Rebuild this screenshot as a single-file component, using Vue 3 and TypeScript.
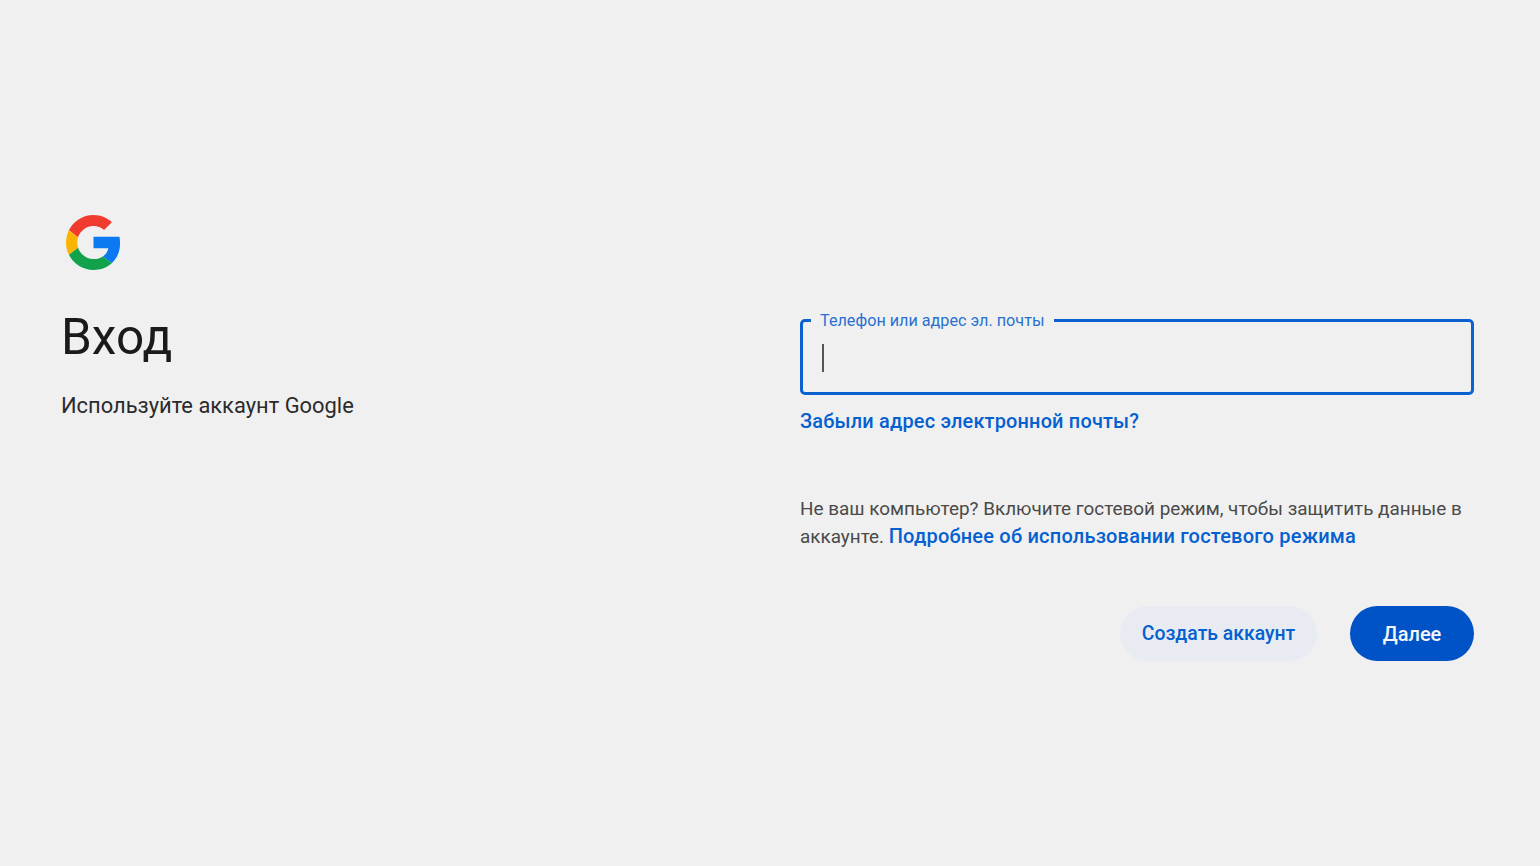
<script setup lang="ts">
const label: string = 'Телефон или адрес эл. почты'
</script>

<template>
  <main class="page">
    <section class="intro">
      <svg class="logo" viewBox="0 0 48 48" aria-label="Google">
        <path fill="#F23B2F" d="M24 9.5c3.54 0 6.71 1.22 9.21 3.6l6.85-6.85C35.9 2.38 30.47 0 24 0 14.62 0 6.51 5.38 2.56 13.22l7.98 6.19C12.43 13.72 17.74 9.5 24 9.5z"/>
        <path fill="#0C78F2" d="M47.2 24.55c0-1.9-.2-3.8-.6-5.55H24v10.02h12.94c-.58 2.96-2.26 5.48-4.78 7.18l7.73 6c4.51-4.18 7.31-10.36 7.31-17.65z"/>
        <path fill="#FBB400" d="M10.53 28.59c-.48-1.45-.76-2.99-.76-4.59s.27-3.14.76-4.59l-7.98-6.19C.92 16.46 0 20.12 0 24c0 3.88.92 7.54 2.56 10.78l7.97-6.19z"/>
        <path fill="#12A24B" d="M24 48c6.48 0 11.93-2.13 15.89-5.81l-7.73-6c-2.15 1.45-4.92 2.3-8.16 2.3-6.26 0-11.57-4.22-13.47-9.91l-7.98 6.19C6.51 42.62 14.62 48 24 48z"/>
      </svg>
      <h1>Вход</h1>
      <p class="sub">Используйте аккаунт Google</p>
    </section>

    <section class="form">
      <div class="field">
        <span class="label">{{ label }}</span>
        <span class="caret"></span>
      </div>
      <a class="link forgot">Забыли адрес электронной почты?</a>
      <p class="guest">Не ваш компьютер? Включите гостевой режим, чтобы защитить данные в аккаунте. <a class="link">Подробнее об использовании гостевого режима</a></p>
      <div class="actions">
        <button class="btn ghost">Создать аккаунт</button>
        <button class="btn primary">Далее</button>
      </div>
    </section>
  </main>
</template>

<style>
html, body { margin: 0; background: #f0f0f0; }
</style>

<style scoped>
.page {
  box-sizing: border-box;
  height: 866px;
  display: flex;
  justify-content: space-between;
  padding: 215px 66px 0 61px;
  background: #f0f0f0;
  font-family: Roboto, "Liberation Sans", sans-serif;
  color: #1f1f1f;
}
.intro { width: 600px; }
.logo { display: block; width: 55px; height: 55px; margin-left: 5px; }
h1 {
  margin: 37px 0 0;
  font-size: 49.5px;
  line-height: 60px;
  font-weight: 400;
  color: #1a1a1a;
}
.sub {
  margin: 24px 0 0;
  font-size: 21.9px;
  line-height: 30px;
  color: #2b2b2b;
}
.form {
  width: 674px;
  padding-top: 104px;
}
.field {
  position: relative;
  box-sizing: border-box;
  height: 76px;
  border: 3px solid #0b62cf;
  border-radius: 5px;
}
.label {
  position: absolute;
  left: 8px;
  top: -11px;
  padding: 0 9px 0 9px;
  background: #f0f0f0;
  font-size: 16.2px;
  line-height: 20px;
  color: #2a70d0;
}
.caret {
  position: absolute;
  left: 19px;
  top: 22px;
  width: 2px;
  height: 28px;
  background: #555;
}
.link {
  color: #0560d0;
  font-weight: 500;
  letter-spacing: 0.2px;
}
.forgot {
  display: block;
  margin-top: 12px;
  font-size: 19.9px;
  line-height: 30px;
}
.guest {
  margin: 58px 0 0;
  font-size: 18.9px;
  line-height: 27.5px;
  color: #4a4a4a;
}
.guest .link { font-size: 20px; }
.actions {
  display: flex;
  justify-content: flex-end;
  gap: 33px;
  margin-top: 56px;
}
.btn {
  height: 55px;
  border: 0;
  border-radius: 28px;
  font-family: inherit;
  font-size: 20px;
  font-weight: 500;
  padding: 0;
}
.ghost { width: 197px; background: #e8ecf2; color: #0560d0; font-size: 19.4px; }
.primary { width: 124px; background: #0053c7; color: #f4f6fa; }
</style>
